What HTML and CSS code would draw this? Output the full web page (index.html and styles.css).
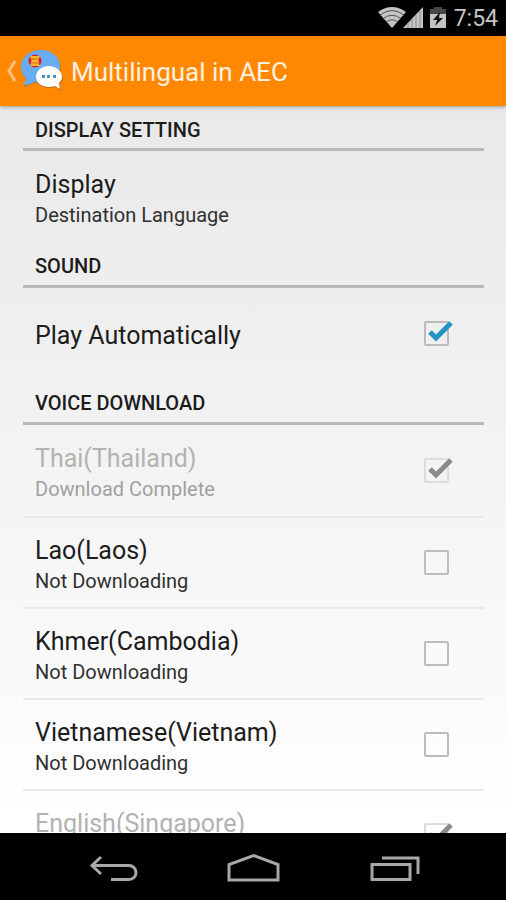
FILE: index.html
```html
<!DOCTYPE html>
<html lang="en">
<head>
<meta charset="utf-8">
<meta name="viewport" content="width=device-width, initial-scale=1">
<title>Multilingual in AEC</title>
<link rel="stylesheet" href="styles.css">
</head>
<body>
<div class="status">
  <svg class="status-icons" width="70" height="24" viewBox="0 0 70 24" aria-hidden="true">
    <path d="M0 6Q14-4 28 6L14 22Z" fill="#c4c4c4"/>
    <path d="M2 9Q14 0 26 9M5 12.500Q14 6 23 12.500M8 16Q14 11.500 20 16" fill="none" stroke="#555" stroke-width="1"/>
    <path d="M25 22L45 1V22Z" fill="#c4c4c4"/>
    <path d="M30 17V22M34 13V22M38 9V22M42 5V22" stroke="#8c8c8c" stroke-width="1"/>
    <path d="M56 1H64V3H68V8H52V3H56Z" fill="#484848"/>
    <path d="M52 8H68V22H52Z" fill="#c4c4c4"/>
    <path d="M62 6L55 14H59L57 20L65 12H61Z" fill="#111"/>
  </svg>
  <time class="clock">7:54</time>
</div>
<header class="bar">
  <a class="up" href="#" aria-label="Navigate up">
    <svg width="57" height="44" viewBox="0 0 57 44" aria-hidden="true">
      <path d="M9 12L3 22L9 32" fill="none" stroke="#ffc180" stroke-width="3"/>
      <path d="M35 2C24 2 15 9 15 19C15 24 17 27 20 30C20 33 18 36 17 38C21 38 25 36 28 34C43 37 55 30 55 19C55 8 46 2 35 2Z" fill="#9a6a34" opacity=".5"/>
      <path d="M35 1C24 1 15 8 15 18C15 23 17 26 20 29C20 32 18 35 17 36C21 36 25 35 28 33C43 36 54 29 54 18C54 7 45 1 35 1Z" fill="#68adf4"/>
      <circle cx="29" cy="12" r="6.500" fill="#d91f2c"/>
      <path d="M24 7H34Q31 12 34 17H24Q27 12 24 7Z" fill="#f5b52d"/>
      <path d="M26 10H32M26 14H32" stroke="#e85b20" stroke-width="1"/>
      <path d="M43 19C35 19 30 23 30 29C30 35 36 39 44 39C47 39 49 38 50 38L55 42L54 35C56 33 57 31 57 29C57 23 50 19 43 19Z" fill="#946020" opacity=".6"/>
      <path d="M43 17C35 17 30 22 30 28C30 34 36 38 43 38C46 38 48 37 49 37L54 40L53 34C55 32 56 30 56 28C56 22 50 17 43 17Z" fill="#fff"/>
      <path d="M36 26H39V29H36ZM41 26H44V29H41ZM47 26H50V29H47Z" fill="#4c93bd"/>
    </svg>
  </a>
  <h1 class="title">Multilingual in AEC</h1>
</header>
<main class="settings">
  <section>
    <h2 class="heading">DISPLAY SETTING</h2>
    <button class="row" type="button">
      <span class="text"><span class="name">Display</span><span class="note">Destination Language</span></span>
    </button>
  </section>
  <section>
    <h2 class="heading">SOUND</h2>
    <label class="row">
      <span class="text"><span class="name">Play Automatically</span></span>
      <span class="tick"><input class="box" type="checkbox" checked><svg class="mark" viewBox="0 0 30 28" aria-hidden="true"><path d="M7 12L13 18L28 3"/></svg></span>
    </label>
  </section>
  <section>
    <h2 class="heading">VOICE DOWNLOAD</h2>
    <label class="row off">
      <span class="text"><span class="name">Thai(Thailand)</span><span class="note">Download Complete</span></span>
      <span class="tick"><input class="box" type="checkbox" checked disabled><svg class="mark" viewBox="0 0 30 28" aria-hidden="true"><path d="M7 12L13 18L28 3"/></svg></span>
    </label>
    <label class="row">
      <span class="text"><span class="name">Lao(Laos)</span><span class="note">Not Downloading</span></span>
      <span class="tick"><input class="box" type="checkbox"><svg class="mark" viewBox="0 0 30 28" aria-hidden="true"><path d="M7 12L13 18L28 3"/></svg></span>
    </label>
    <label class="row">
      <span class="text"><span class="name">Khmer(Cambodia)</span><span class="note">Not Downloading</span></span>
      <span class="tick"><input class="box" type="checkbox"><svg class="mark" viewBox="0 0 30 28" aria-hidden="true"><path d="M7 12L13 18L28 3"/></svg></span>
    </label>
    <label class="row">
      <span class="text"><span class="name">Vietnamese(Vietnam)</span><span class="note">Not Downloading</span></span>
      <span class="tick"><input class="box" type="checkbox"><svg class="mark" viewBox="0 0 30 28" aria-hidden="true"><path d="M7 12L13 18L28 3"/></svg></span>
    </label>
    <label class="row off tall">
      <span class="text"><span class="name">English(Singapore)</span></span>
      <span class="tick"><input class="box" type="checkbox" checked disabled><svg class="mark" viewBox="0 0 30 28" aria-hidden="true"><path d="M7 12L13 18L28 3"/></svg></span>
    </label>
  </section>
</main>
<nav class="nav" aria-label="System">
  <button class="key" type="button" aria-label="Back">
    <svg width="54" height="34" viewBox="0 0 54 34" aria-hidden="true"><path d="M15 7L6 15.500L15 24M6 15.500H43A7 7 0 0 1 43 29.500H25"/></svg>
  </button>
  <button class="key" type="button" aria-label="Home">
    <svg width="54" height="34" viewBox="0 0 54 34" aria-hidden="true"><path d="M3 30V14.500L27.500 5.500L52 14.500V30Z"/></svg>
  </button>
  <button class="key" type="button" aria-label="Recent apps">
    <svg width="54" height="34" viewBox="0 0 54 34" aria-hidden="true"><path d="M6 14.500H44V29.500H6ZM16 8H52V24"/></svg>
  </button>
</nav>
</body>
</html>
```
FILE: styles.css
```css
* {
  box-sizing: border-box;
}

body {
  margin: 0;
  height: 100vh;
  display: flex;
  flex-direction: column;
  overflow: hidden;
  background: #000;
  color: #1c1c1c;
  font-family: Roboto, "Liberation Sans", sans-serif;
}

.status {
  flex: none;
  height: 36px;
  padding: 0 8px;
  display: flex;
  align-items: center;
  justify-content: flex-end;
  gap: 6px;
  color: #c4c4c4;
}

.clock {
  font-size: 23px;
  line-height: 36px;
  padding-top: 2px;
}

.bar {
  flex: none;
  height: 70px;
  padding-left: 6px;
  display: flex;
  align-items: center;
  gap: 8px;
  background: #ff8800;
  box-shadow: 0 1px 4px rgba(0, 0, 0, 0.35);
  position: relative;
}

.up,
.up svg {
  display: block;
}

.title {
  margin: 0;
  padding-top: 2px;
  color: #fff0e0;
  font-size: 26px;
  font-weight: 400;
  line-height: 32px;
}

.settings {
  flex: 1;
  min-height: 0;
  overflow: hidden;
  padding: 0 22px 0 23px;
  background: linear-gradient(#e9e9e9, #f0f0f0 35%, #fff);
}

.heading {
  margin: 0;
  height: 45px;
  padding: 0 12px;
  border-bottom: 3px solid #b9b9b9;
  font-size: 20px;
  font-weight: 500;
  line-height: 48px;
}

.row {
  width: 100%;
  height: 91px;
  padding: 0 31px 0 12px;
  display: flex;
  align-items: center;
  justify-content: space-between;
  border: 0;
  background: none;
  color: inherit;
  font: inherit;
  text-align: left;
}

section + section .heading {
  height: 46px;
}

.row + .row {
  border-top: 2px solid #e9e9e9;
}

.text {
  padding-top: 4px;
  display: flex;
  flex-direction: column;
}

.tall .text {
  min-height: 64px;
}

.name {
  font-size: 25px;
  line-height: 32px;
}

.note {
  color: #303030;
  font-size: 20px;
  line-height: 28px;
}

.off .name {
  color: #b2b2b2;
}

.off .note {
  color: #a0a0a0;
}

.tick {
  display: grid;
  align-items: center;
}

.box,
.mark {
  grid-area: 1 / 1;
}

.box {
  appearance: none;
  width: 25px;
  height: 25px;
  margin: 0 0 0 1px;
  border: 2px solid #bcbcbc;
  border-radius: 2px;
}

.box:disabled {
  border-color: #dcdcdc;
}

.mark {
  width: 30px;
  height: 28px;
  visibility: hidden;
  fill: none;
  stroke: #2493c4;
  stroke-width: 5;
  pointer-events: none;
}

.box:checked + .mark {
  visibility: visible;
}

.box:disabled + .mark {
  stroke: #8a8a8a;
}

.nav {
  flex: none;
  height: 67px;
  padding: 0 43px;
  display: flex;
  align-items: center;
  background: #000;
}

.key {
  flex: 1;
  padding: 0;
  display: flex;
  justify-content: center;
  border: 0;
  background: none;
}

.key svg {
  fill: none;
  stroke: #a8a8a8;
  stroke-width: 3;
}
```
